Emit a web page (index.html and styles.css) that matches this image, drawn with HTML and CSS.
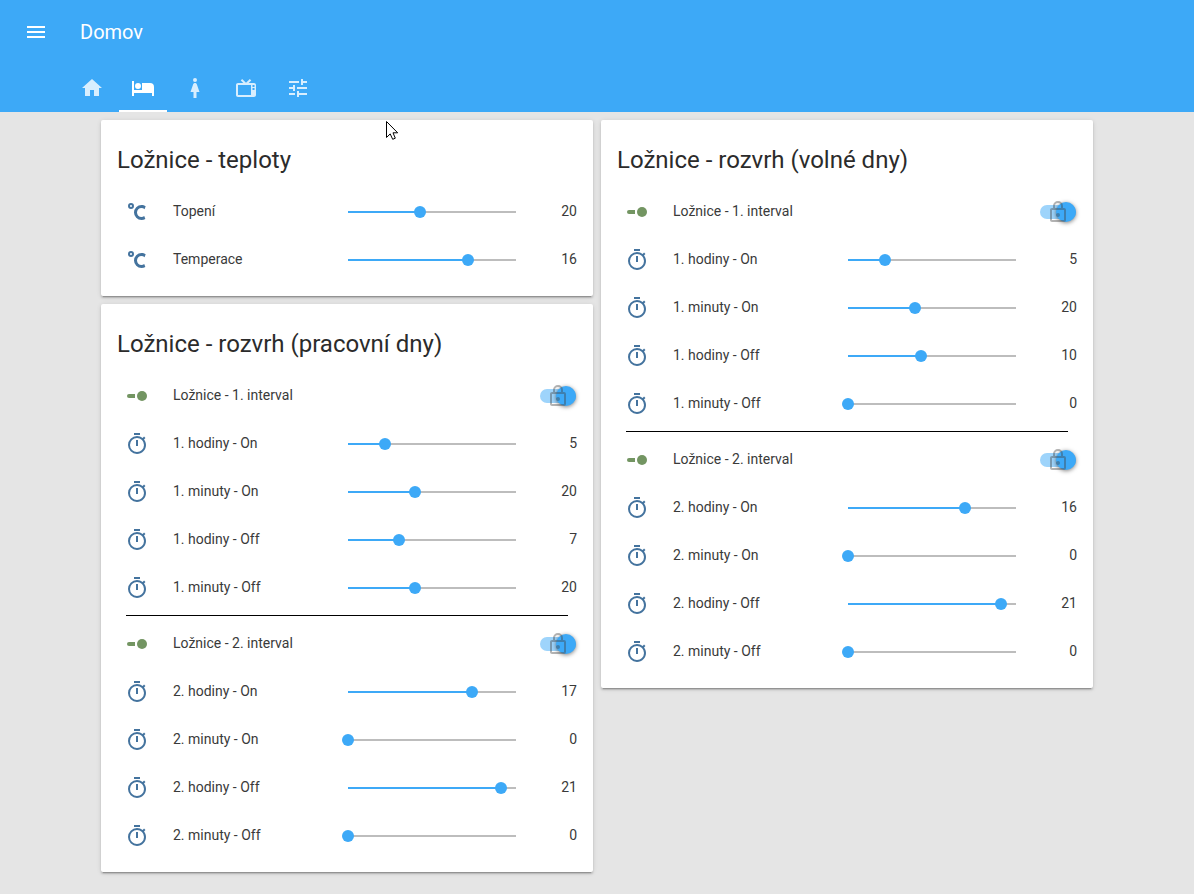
FILE: index.html
```html
<!DOCTYPE html>
<html lang="cs">
<head>
<meta charset="utf-8">
<meta name="viewport" content="width=device-width, initial-scale=1">
<title>Domov</title>
<link rel="stylesheet" href="styles.css">
</head>
<body>
<svg class="sprite" aria-hidden="true">
  <symbol id="menu" viewBox="0 0 24 24"><path d="M3,6H21V8H3V6M3,11H21V13H3V11M3,16H21V18H3V16Z"/></symbol>
  <symbol id="home" viewBox="0 0 24 24"><path d="M10,20V14H14V20H19V12H22L12,3L2,12H5V20H10Z"/></symbol>
  <symbol id="bed" viewBox="0 0 24 24"><path d="M19,7H11V14H3V5H1V20H3V17H21V20H23V11A4,4 0 0,0 19,7M7,13A3,3 0 0,0 10,10A3,3 0 0,0 7,7A3,3 0 0,0 4,10A3,3 0 0,0 7,13Z"/></symbol>
  <symbol id="woman" viewBox="0 0 24 24"><path d="M12,2A2,2 0 0,1 14,4A2,2 0 0,1 12,6A2,2 0 0,1 10,4A2,2 0 0,1 12,2M10.500,22V16H7.500L10.090,8.410C10.340,7.590 11.100,7 12,7C12.900,7 13.660,7.590 13.910,8.410L16.500,16H13.500V22H10.500Z"/></symbol>
  <symbol id="tv" viewBox="0 0 24 24"><path d="M8.160,3L6.750,4.410L9.340,7H4C2.890,7 2,7.890 2,9V19C2,20.110 2.890,21 4,21H20C21.110,21 22,20.110 22,19V9C22,7.890 21.110,7 20,7H14.660L17.250,4.410L15.840,3L12,6.840L8.160,3M4,9H17V19H4V9M18.500,9H20.500V11H18.500V9M18.500,12H20.500V14H18.500V12Z"/></symbol>
  <symbol id="tune" viewBox="0 0 24 24"><path d="M3,17V19H9V17H3M3,5V7H13V5H3M13,21V19H21V17H13V15H11V21H13M7,9V11H3V13H7V15H9V9H7M21,13V11H11V13H21M15,9H17V7H21V5H17V3H15V9Z"/></symbol>
  <symbol id="celsius" viewBox="0 0 24 24"><path d="M16.500,5C18.050,5 19.500,5.470 20.690,6.280L19.530,9.170C18.730,8.440 17.670,8 16.500,8C14,8 12,10 12,12.500C12,15 14,17 16.500,17C17.530,17 18.470,16.660 19.230,16.080L20.370,18.930C19.240,19.610 17.920,20 16.500,20A7.500,7.500 0 0,1 9,12.500A7.500,7.500 0 0,1 16.500,5M6,3A3,3 0 0,1 9,6A3,3 0 0,1 6,9A3,3 0 0,1 3,6A3,3 0 0,1 6,3M6,5A1,1 0 0,0 5,6A1,1 0 0,0 6,7A1,1 0 0,0 7,6A1,1 0 0,0 6,5Z"/></symbol>
  <symbol id="timer" viewBox="0 0 24 24"><path d="M12,20A7,7 0 0,1 5,13A7,7 0 0,1 12,6A7,7 0 0,1 19,13A7,7 0 0,1 12,20M19.030,7.390L20.450,5.970C20,5.460 19.550,5 19.040,4.560L17.620,6C16.070,4.740 14.120,4 12,4A9,9 0 0,0 3,13A9,9 0 0,0 12,22C17,22 21,17.970 21,13C21,10.880 20.260,8.930 19.030,7.390M11,14H13V8H11M15,1H9V3H15V1Z"/></symbol>
  <symbol id="switch" viewBox="0 0 24 24"><path d="M4,10H10V14H4A2,2 0 0,1 4,10Z"/><circle cx="17" cy="12" r="5"/></symbol>
  <symbol id="lock" viewBox="0 0 24 24"><path d="M12,17C10.890,17 10,16.100 10,15C10,13.890 10.890,13 12,13A2,2 0 0,1 14,15A2,2 0 0,1 12,17M18,20V10H6V20H18M18,8A2,2 0 0,1 20,10V20A2,2 0 0,1 18,22H6C4.890,22 4,21.100 4,20V10C4,8.890 4.890,8 6,8H7V6A5,5 0 0,1 12,1A5,5 0 0,1 17,6V8H18M12,3A3,3 0 0,0 9,6V8H15V6A3,3 0 0,0 12,3Z"/></symbol>
</svg>

<header class="app-header">
  <div class="toolbar">
    <button class="menu-button" type="button" aria-label="Menu"><svg class="icon"><use href="#menu"/></svg></button>
    <h1 class="app-title">Domov</h1>
  </div>
  <nav class="tabs">
    <a class="tab" href="#domov" aria-label="Domov"><svg class="icon"><use href="#home"/></svg></a>
    <a class="tab tab-active" href="#loznice" aria-label="Ložnice" aria-current="page"><svg class="icon"><use href="#bed"/></svg></a>
    <a class="tab" href="#pokoj" aria-label="Pokoj"><svg class="icon"><use href="#woman"/></svg></a>
    <a class="tab" href="#obyvak" aria-label="Obývák"><svg class="icon"><use href="#tv"/></svg></a>
    <a class="tab" href="#nastaveni" aria-label="Nastavení"><svg class="icon"><use href="#tune"/></svg></a>
  </nav>
</header>

<main class="columns">
  <div class="column">
    <section class="card">
      <h2 class="card-title">Ložnice - teploty</h2>
      <div class="rows" data-rows='[["celsius","Topení",20,17,24],["celsius","Temperace",16,11,18]]'></div>
    </section>
    <section class="card">
      <h2 class="card-title">Ložnice - rozvrh (pracovní dny)</h2>
      <div class="rows" data-rows='[["switch","Ložnice - 1. interval"],["timer","1. hodiny - On",5,0,23],["timer","1. minuty - On",20,0,50],["timer","1. hodiny - Off",7,0,23],["timer","1. minuty - Off",20,0,50],["divider"],["switch","Ložnice - 2. interval"],["timer","2. hodiny - On",17,0,23],["timer","2. minuty - On",0,0,50],["timer","2. hodiny - Off",21,0,23],["timer","2. minuty - Off",0,0,50]]'></div>
    </section>
  </div>
  <div class="column">
    <section class="card">
      <h2 class="card-title">Ložnice - rozvrh (volné dny)</h2>
      <div class="rows" data-rows='[["switch","Ložnice - 1. interval"],["timer","1. hodiny - On",5,0,23],["timer","1. minuty - On",20,0,50],["timer","1. hodiny - Off",10,0,23],["timer","1. minuty - Off",0,0,50],["divider"],["switch","Ložnice - 2. interval"],["timer","2. hodiny - On",16,0,23],["timer","2. minuty - On",0,0,50],["timer","2. hodiny - Off",21,0,23],["timer","2. minuty - Off",0,0,50]]'></div>
    </section>
  </div>
</main>

<svg class="pointer" viewBox="0 0 12 19" aria-hidden="true"><path d="M.5,.5V16.500L4.200,12.900L6.700,18.300L9.300,17.200L7,11.800H11.700Z"/></svg>
<script src="app.js"></script>
</body>
</html>
```
FILE: styles.css
```css
* { box-sizing: border-box; }

body {
  margin: 0;
  min-height: 100vh;
  background: #e5e5e5;
  color: #2b2b2b;
  font: 14px/20px Roboto, sans-serif;
}

.sprite { display: none; }

.icon {
  display: block;
  flex: none;
  width: 24px;
  height: 24px;
  fill: currentColor;
}

.app-header {
  background: #3da9f7;
  color: #fff;
}

.toolbar {
  display: flex;
  align-items: center;
  height: 64px;
  padding: 0 16px;
}

.menu-button {
  padding: 8px;
  border: 0;
  background: none;
  color: inherit;
}

.app-title {
  margin: 0 0 0 24px;
  font-size: 20px;
  font-weight: 400;
  line-height: 28px;
}

.tabs {
  height: 48px;
  padding-left: 68px;
}

.tab {
  display: inline-block;
  height: 48px;
  padding: 12px 12px 10px;
  border-bottom: 2px solid transparent;
  color: rgba(255, 255, 255, 0.8);
  vertical-align: top;
}

.tab-active {
  border-color: #fff;
  color: #fff;
}

.columns {
  display: flex;
  justify-content: center;
  align-items: flex-start;
  gap: 8px;
  padding: 8px;
}

.column {
  display: flex;
  flex: 1;
  flex-direction: column;
  gap: 8px;
  max-width: 492px;
}

.card {
  padding: 24px 16px 16px;
  border-radius: 2px;
  background: #fff;
  box-shadow: 0 2px 2px rgba(0, 0, 0, 0.14), 0 1px 5px rgba(0, 0, 0, 0.12), 0 3px 1px -2px rgba(0, 0, 0, 0.2);
}

.card-title {
  margin: 0 0 16px;
  font-size: 24px;
  font-weight: 400;
  line-height: 32px;
}

.row {
  display: flex;
  align-items: center;
  height: 40px;
}

.row + .row,
.divider + .row { margin-top: 8px; }

.divider {
  height: 1px;
  margin: 7px 9px 0;
  border: 0;
  background: #000;
}

.row-icon {
  width: 40px;
  padding: 0 8px;
  color: #44739e;
}

.row-icon-switch { color: #739562; }

.row-label,
.value {
  padding-bottom: 2px;
  color: #3a3a3a;
}

.row-label {
  flex: 1;
  margin-left: 16px;
}

.slider {
  width: 180px;
  height: 20px;
  margin: 0 10px;
  background: none;
  appearance: none;
}

.slider::-webkit-slider-runnable-track {
  height: 12px;
  background:
    linear-gradient(#3da9f7, #3da9f7) 6px 5px / calc((100% - 12px) * var(--fill)) 2px no-repeat,
    linear-gradient(#bdbdbd, #bdbdbd) 6px 5px / calc(100% - 12px) 2px no-repeat;
}

.slider::-webkit-slider-thumb {
  width: 12px;
  height: 12px;
  border-radius: 50%;
  background: #3da9f7;
  appearance: none;
}

.value {
  width: 45px;
  text-align: right;
}

.toggle {
  position: relative;
  display: flex;
  align-items: center;
  width: 36px;
  height: 20px;
  margin-right: 1px;
}

.toggle-input {
  width: 36px;
  height: 14px;
  margin: 0;
  border-radius: 7px;
  background: #9ed4fb;
  appearance: none;
}

.toggle-input::after {
  position: absolute;
  top: 0;
  right: 0;
  width: 20px;
  height: 20px;
  border-radius: 50%;
  background: #3da9f7;
  box-shadow: 0 1px 4px rgba(0, 0, 0, 0.5);
  content: "";
}

.toggle-lock {
  position: absolute;
  top: -2px;
  left: 6px;
  color: rgba(66, 66, 66, 0.4);
  pointer-events: none;
}

.pointer {
  position: absolute;
  top: 121px;
  left: 386px;
  width: 12px;
  height: 19px;
  fill: #fff;
  stroke: #000;
}
```
FILE: app.js
```js
const icon = (name, extra) => `<svg class="icon ${extra}" aria-hidden="true"><use href="#${name}"/></svg>`;
let nextId = 0;

function renderRow([kind, label, value, min, max]) {
  if (kind === "divider") return '<hr class="divider">';
  const id = `entity-${nextId++}`;
  const text = `<label class="row-label" for="${id}">${label}</label>`;
  if (kind === "switch") {
    return `<div class="row">${icon(kind, "row-icon row-icon-switch")}${text}
      <span class="toggle"><input class="toggle-input" id="${id}" type="checkbox" role="switch" checked>${icon("lock", "toggle-lock")}</span></div>`;
  }
  const fill = (value - min) / (max - min);
  return `<div class="row">${icon(kind, "row-icon")}${text}
    <input class="slider" id="${id}" type="range" min="${min}" max="${max}" value="${value}" style="--fill: ${fill}">
    <output class="value" for="${id}">${value}</output></div>`;
}

document.querySelectorAll(".rows").forEach((rows) => {
  rows.innerHTML = JSON.parse(rows.dataset.rows).map(renderRow).join("");
});

document.querySelectorAll(".slider").forEach((slider) => {
  slider.addEventListener("input", () => {
    slider.style.setProperty("--fill", (slider.value - slider.min) / (slider.max - slider.min));
    slider.nextElementSibling.value = slider.value;
  });
});
```
